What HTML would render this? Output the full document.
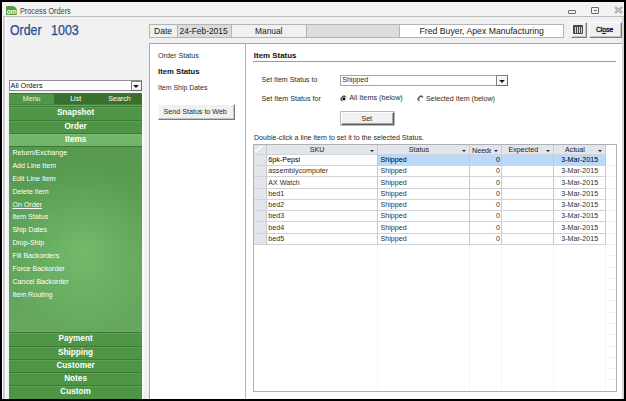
<!DOCTYPE html>
<html><head><meta charset="utf-8"><title>Process Orders</title>
<style>
*{box-sizing:border-box;margin:0;padding:0}
html,body{width:626px;height:401px;overflow:hidden;background:#000}
body{position:relative;font-family:"Liberation Sans",sans-serif;font-size:8px;color:#222}
.a{position:absolute}
.t{position:absolute;white-space:nowrap}
</style></head><body>
<div class="a" style="left:2px;top:2px;width:622px;height:397px;background:#f0f0f0;"></div>
<div class="a" style="left:2px;top:2px;width:622px;height:14px;background:#f2f2f2;"></div>
<div class="a" style="left:3px;top:16px;width:621px;height:1px;background:#bdbdbd;"></div>
<div class="a" style="left:2px;top:16px;width:1px;height:383px;background:#fff;"></div>
<div class="a" style="left:3px;top:17px;width:1px;height:382px;background:#c2c2c8;"></div>
<div class="a" style="left:4px;top:17px;width:1px;height:382px;background:#d4d4d9;"></div>
<div class="a" style="left:5px;top:17px;width:2px;height:382px;background:#f9f9f9;"></div>
<div class="a" style="left:622px;top:17px;width:2px;height:382px;background:#d6d6da;"></div>
<div class="a" style="left:6px;top:5.7px;width:10.5px;height:9.3px;background:#4f9b46;border-radius:1px 5px 1px 1px"></div>
<div class="t" style="left:6.8px;top:5.71px;font-size:6.6px;line-height:12px;color:#fff;font-weight:bold;">om</div>
<div class="t" style="left:20px;top:5.07px;font-size:9.6px;line-height:12px;color:#454545;transform-origin:0 50%;transform:scaleX(0.7618);">Process Orders</div>
<div class="a" style="left:568px;top:10px;width:8px;height:4px;border:1px solid #6a6a6a;border-radius:1px"></div>
<div class="a" style="left:591px;top:7px;width:8px;height:7px;border:1px solid #6a6a6a;border-radius:1px"></div>
<div class="a" style="left:593.5px;top:10px;width:3px;height:1px;background:#6a6a6a;"></div>
<svg class="a" style="left:614px;top:6px" width="9" height="8" viewBox="0 0 9 8"><path d="M1 1 L8 7 M8 1 L1 7" stroke="#8a8a8a" stroke-width="2.2" fill="none"/><path d="M1 1 L8 7 M8 1 L1 7" stroke="#f2f2f2" stroke-width="0.8" fill="none"/></svg>
<div class="t" style="left:9.5px;top:23.85px;font-size:14px;line-height:12px;color:#1f4f8f;transform-origin:0 50%;transform:scaleX(0.8802);-webkit-text-stroke:0.25px #1f4f8f;">Order</div>
<div class="t" style="left:51px;top:23.85px;font-size:14px;line-height:12px;color:#1f4f8f;transform-origin:0 50%;transform:scaleX(0.8926);-webkit-text-stroke:0.25px #1f4f8f;">1003</div>
<div class="a" style="left:149px;top:24.3px;width:415px;height:13.5px;background:#f0f0f0;border:1px solid #b4b4b4"></div>
<div class="a" style="left:177px;top:25px;width:55px;height:12px;background:#dcdcdc;border-left:1px solid #b4b4b4;border-right:1px solid #b4b4b4"></div>
<div class="a" style="left:306px;top:25px;width:94px;height:12px;background:#dcdcdc;border-left:1px solid #b4b4b4;border-right:1px solid #b4b4b4"></div>
<div class="a" style="left:400px;top:25px;width:163px;height:12px;background:#fff;"></div>
<div class="t" style="left:154px;top:24.65px;font-size:8.52px;line-height:12px;color:#1a1a1a;">Date</div>
<div class="t" style="left:179.6px;top:24.70px;font-size:8.38px;line-height:12px;color:#1a1a1a;">24-Feb-2015</div>
<div class="t" style="left:255px;top:24.70px;font-size:8.38px;line-height:12px;color:#1a1a1a;">Manual</div>
<div class="t" style="left:419.5px;top:24.58px;font-size:8.71px;line-height:12px;color:#1a1a1a;">Fred Buyer, Apex Manufacturing</div>
<div class="a" style="left:571px;top:22px;width:16px;height:16px;background:#f0f0f0;border:1px solid #fff;border-right-color:#7c7c7c;border-bottom-color:#7c7c7c;box-shadow:inset -1px -1px 0 #c4c4c4"></div>
<div class="a" style="left:573px;top:25px;width:10px;height:9px;background:#4a4a4a;border-radius:1px"></div>
<div class="a" style="left:575px;top:27px;width:1px;height:6px;background:#d8d8d8;"></div>
<div class="a" style="left:577px;top:27px;width:1px;height:6px;background:#d8d8d8;"></div>
<div class="a" style="left:579px;top:27px;width:1px;height:6px;background:#d8d8d8;"></div>
<div class="a" style="left:581px;top:27px;width:1px;height:6px;background:#d8d8d8;"></div>
<div class="a" style="left:589.3px;top:22px;width:32.5px;height:16px;background:#f0f0f0;border:1px solid #fff;border-right-color:#7c7c7c;border-bottom-color:#7c7c7c;box-shadow:inset -1px -1px 0 #c4c4c4"></div>
<div class="t" style="left:596px;top:24.07px;font-size:7.0px;line-height:12px;color:#0c1230;letter-spacing:-0.219px;-webkit-text-stroke:0.3px #0c1230;">Cl<u>o</u>se</div>
<div class="a" style="left:142px;top:92px;width:2px;height:307px;background:#fafafa;"></div>
<div class="a" style="left:149px;top:42.5px;width:473px;height:356.5px;background:#fff;border-left:1px solid #a8a8a8;border-top:1px solid #a8a8a8"></div>
<div class="a" style="left:245px;top:43px;width:1px;height:356px;background:#b4b4b4;"></div>
<div class="t" style="left:158px;top:49.69px;font-size:7.23px;line-height:12px;color:#2a2a2a;">Order Status</div>
<div class="t" style="left:158px;top:66.13px;font-size:7.72px;line-height:12px;color:#111;font-weight:bold;">Item Status</div>
<div class="t" style="left:158px;top:81.60px;font-size:6.94px;line-height:12px;color:#2a2a2a;">Item Ship Dates</div>
<div class="a" style="left:157.6px;top:104px;width:77.4px;height:16px;background:#f0f0f0;border:1px solid #fff;border-right-color:#7c7c7c;border-bottom-color:#7c7c7c;box-shadow:inset -1px -1px 0 #c4c4c4"></div>
<div class="t" style="left:163.6px;top:105.73px;font-size:7.14px;line-height:12px;color:#2a2a2a;">Send Status to Web</div>
<div class="t" style="left:253.8px;top:49.86px;font-size:7.92px;line-height:12px;color:#111;font-weight:bold;">Item Status</div>
<div class="a" style="left:253px;top:61px;width:363px;height:1px;background:#9a9a9a;"></div>
<div class="t" style="left:261.6px;top:73.87px;font-size:7.02px;line-height:12px;color:#2a2a2a;">Set Item Status to</div>
<div class="t" style="left:261.6px;top:92.52px;font-size:7.17px;line-height:12px;color:#2a2a2a;">Set Item Status for</div>
<div class="a" style="left:340px;top:74.5px;width:168px;height:11px;background:#fff;border:1px solid #a6a6a6"></div>
<div class="t" style="left:342.2px;top:74.05px;font-size:7.08px;line-height:12px;color:#2a2a2a;">Shipped</div>
<div class="a" style="left:496.4px;top:74.5px;width:11.6px;height:11px;background:#f2f2f2;border:1px solid #808080;border-right-color:#6a6a6a;border-bottom-color:#6a6a6a;box-shadow:inset 1px 1px 0 #fff"></div>
<svg class="a" style="left:499px;top:79.8px" width="6" height="3" viewBox="0 0 6 3"><path d="M0.2 0 L5.8 0 L3 2.9 Z" fill="#111"/></svg>
<svg class="a" style="left:339.9px;top:95px" width="8" height="8" viewBox="0 0 8 8"><circle cx="4" cy="4" r="3.4" fill="#fff"/><path d="M1.6 6.4 A3.4 3.4 0 0 1 6.4 1.6" fill="none" stroke="#6e6e6e" stroke-width="0.9"/><path d="M2.3 5.7 A2.4 2.4 0 0 1 5.7 2.3" fill="none" stroke="#222" stroke-width="0.9"/><path d="M6.4 1.6 A3.4 3.4 0 0 1 1.6 6.4" fill="none" stroke="#ececec" stroke-width="0.8"/><circle cx="4" cy="4" r="1.4" fill="#000"/></svg>
<div class="t" style="left:349.3px;top:92.49px;font-size:7.24px;line-height:12px;color:#2a2a2a;">All Items (below)</div>
<svg class="a" style="left:416.7px;top:95px" width="8" height="8" viewBox="0 0 8 8"><circle cx="4" cy="4" r="3.4" fill="#fff"/><path d="M1.6 6.4 A3.4 3.4 0 0 1 6.4 1.6" fill="none" stroke="#6e6e6e" stroke-width="0.9"/><path d="M2.3 5.7 A2.4 2.4 0 0 1 5.7 2.3" fill="none" stroke="#222" stroke-width="0.9"/><path d="M6.4 1.6 A3.4 3.4 0 0 1 1.6 6.4" fill="none" stroke="#ececec" stroke-width="0.8"/></svg>
<div class="t" style="left:426px;top:92.53px;font-size:7.13px;line-height:12px;color:#2a2a2a;">Selected Item (below)</div>
<div class="a" style="left:341px;top:112px;width:52.5px;height:13.4px;background:#f0f0f0;border:1px solid #fff;border-right-color:#5a5a5a;border-bottom-color:#5a5a5a;box-shadow:inset -1px -1px 0 #a8a8a8, 0 0 0 0.6px #8c8c8c"></div>
<div class="t" style="left:361.4px;top:112.83px;font-size:7.13px;line-height:12px;color:#2a2a2a;">Set</div>
<div class="t" style="left:254px;top:131.54px;font-size:7.1px;line-height:12px;color:#2a2a2a;">Double-click a line item to set it to the selected Status.</div>
<div class="a" style="left:9px;top:80.2px;width:133px;height:10.6px;background:#fff;border:1px solid #8f8f8f"></div>
<div class="t" style="left:10.6px;top:79.81px;font-size:7.2px;line-height:12px;color:#111;">All Orders</div>
<div class="a" style="left:130.8px;top:80.5px;width:11px;height:10.3px;background:#f2f2f2;border:1px solid #808080;border-right-color:#6a6a6a;border-bottom-color:#6a6a6a;box-shadow:inset 1px 1px 0 #fff"></div>
<svg class="a" style="left:133.2px;top:85.2px" width="6" height="3" viewBox="0 0 6 3"><path d="M0.2 0 L5.8 0 L3 2.9 Z" fill="#111"/></svg>
<div class="a" style="left:9px;top:93px;width:133px;height:305px;background:#4e9646;"></div>
<div class="a" style="left:9px;top:93px;width:45px;height:11px;background:#4f9747;"></div>
<div class="a" style="left:54px;top:93px;width:88px;height:11px;background:#38702f;"></div>
<div class="a" style="left:9px;top:93px;width:133px;height:1px;background:#3b7a36;"></div>
<div class="a" style="left:9px;top:104px;width:133px;height:1px;background:#3f7f39;"></div>
<div class="a" style="left:9px;top:105px;width:133px;height:1px;background:#6aac62;"></div>
<div class="t" style="left:22.82px;top:92.54px;font-size:7.1px;line-height:12px;color:#e9f6e2;">Menu</div>
<div class="t" style="left:70.18px;top:92.54px;font-size:7.1px;line-height:12px;color:#fff;">List</div>
<div class="t" style="left:108.25px;top:92.54px;font-size:7.1px;line-height:12px;color:#fff;">Search</div>
<div class="a" style="left:9px;top:106px;width:133px;height:14px;background:#4e9646;border-top:1px solid #3b7a36;box-shadow:inset 0 1px 0 rgba(255,255,255,0.10)"></div>
<div class="t" style="left:56.92px;top:107.36px;font-size:8.2px;line-height:12px;color:#fff;font-weight:bold;">Snapshot</div>
<div class="a" style="left:9px;top:119.6px;width:133px;height:14px;background:#4e9646;border-top:1px solid #3b7a36;box-shadow:inset 0 1px 0 rgba(255,255,255,0.10)"></div>
<div class="t" style="left:64.44px;top:120.96px;font-size:8.2px;line-height:12px;color:#fff;font-weight:bold;">Order</div>
<div class="a" style="left:9px;top:133px;width:133px;height:14px;background:#72b56a;border-top:1px solid #3b7a36;box-shadow:inset 0 1px 0 rgba(255,255,255,0.10)"></div>
<div class="t" style="left:64.89px;top:134.36px;font-size:8.2px;line-height:12px;color:#fff;font-weight:bold;">Items</div>
<div class="a" style="left:9px;top:146.4px;width:133px;height:186px;background:linear-gradient(180deg,rgba(0,0,0,0.05),rgba(255,255,255,0.07)),radial-gradient(ellipse 62% 44% at 56% 56%,#6fbc67 0%,#63ad5c 55%,#5aa153 100%);border-top:1px solid #3b7a36"></div>
<div class="t" style="left:12.4px;top:146.95px;font-size:7.08px;line-height:12px;color:#fff;">Return/Exchange</div>
<div class="t" style="left:12.4px;top:159.85px;font-size:7.08px;line-height:12px;color:#fff;">Add Line Item</div>
<div class="t" style="left:12.4px;top:172.75px;font-size:7.08px;line-height:12px;color:#fff;">Edit Line Item</div>
<div class="t" style="left:12.4px;top:185.65px;font-size:7.08px;line-height:12px;color:#fff;">Delete Item</div>
<div class="t" style="left:12.4px;top:198.55px;font-size:7.08px;line-height:12px;color:#fff;text-decoration:underline;">On Order</div>
<div class="t" style="left:12.4px;top:211.45px;font-size:7.08px;line-height:12px;color:#fff;">Item Status</div>
<div class="t" style="left:12.4px;top:224.35px;font-size:7.08px;line-height:12px;color:#fff;">Ship Dates</div>
<div class="t" style="left:12.4px;top:237.25px;font-size:7.08px;line-height:12px;color:#fff;">Drop-Ship</div>
<div class="t" style="left:12.4px;top:250.15px;font-size:7.08px;line-height:12px;color:#fff;">Fill Backorders</div>
<div class="t" style="left:12.4px;top:263.05px;font-size:7.08px;line-height:12px;color:#fff;">Force Backorder</div>
<div class="t" style="left:12.4px;top:275.95px;font-size:7.08px;line-height:12px;color:#fff;">Cancel Backorder</div>
<div class="t" style="left:12.4px;top:288.85px;font-size:7.08px;line-height:12px;color:#fff;">Item Routing</div>
<div class="a" style="left:9px;top:332px;width:133px;height:14px;background:#4e9646;border-top:1px solid #3b7a36;box-shadow:inset 0 1px 0 rgba(255,255,255,0.10)"></div>
<div class="t" style="left:58.51px;top:333.36px;font-size:8.2px;line-height:12px;color:#fff;font-weight:bold;">Payment</div>
<div class="a" style="left:9px;top:345.5px;width:133px;height:14px;background:#4e9646;border-top:1px solid #3b7a36;box-shadow:inset 0 1px 0 rgba(255,255,255,0.10)"></div>
<div class="t" style="left:58.06px;top:346.86px;font-size:8.2px;line-height:12px;color:#fff;font-weight:bold;">Shipping</div>
<div class="a" style="left:9px;top:358.8px;width:133px;height:14px;background:#4e9646;border-top:1px solid #3b7a36;box-shadow:inset 0 1px 0 rgba(255,255,255,0.10)"></div>
<div class="t" style="left:56.46px;top:360.16px;font-size:8.2px;line-height:12px;color:#fff;font-weight:bold;">Customer</div>
<div class="a" style="left:9px;top:372px;width:133px;height:14px;background:#4e9646;border-top:1px solid #3b7a36;box-shadow:inset 0 1px 0 rgba(255,255,255,0.10)"></div>
<div class="t" style="left:64.21px;top:373.36px;font-size:8.2px;line-height:12px;color:#fff;font-weight:bold;">Notes</div>
<div class="a" style="left:9px;top:385px;width:133px;height:14px;background:#4e9646;border-top:1px solid #3b7a36;box-shadow:inset 0 1px 0 rgba(255,255,255,0.10)"></div>
<div class="t" style="left:60.34px;top:386.36px;font-size:8.2px;line-height:12px;color:#fff;font-weight:bold;">Custom</div>
<div class="a" style="left:253px;top:144px;width:364px;height:248px;background:#fff;border:1px solid #adb0b5"></div>
<div class="a" style="left:254px;top:145px;width:351.5px;height:9.300000000000011px;background:#e2e5ea;"></div>
<div class="a" style="left:254px;top:154.3px;width:12px;height:90.23999999999998px;background:#e2e5ea;"></div>
<div class="a" style="left:378px;top:154.3px;width:227.5px;height:11.28px;background:#b9d9fb;"></div>
<div class="a" style="left:266px;top:145px;width:1px;height:100px;background:#c6cad0;"></div>
<div class="a" style="left:377px;top:145px;width:1px;height:100px;background:#c6cad0;"></div>
<div class="a" style="left:469px;top:145px;width:1px;height:100px;background:#c6cad0;"></div>
<div class="a" style="left:501px;top:145px;width:1px;height:100px;background:#c6cad0;"></div>
<div class="a" style="left:553px;top:145px;width:1px;height:100px;background:#c6cad0;"></div>
<div class="a" style="left:605px;top:145px;width:1px;height:100px;background:#c6cad0;"></div>
<div class="a" style="left:254px;top:154px;width:352px;height:1px;background:#d0d4da;"></div>
<div class="a" style="left:254px;top:165px;width:352px;height:1px;background:#d0d4da;"></div>
<div class="a" style="left:254px;top:176px;width:352px;height:1px;background:#d0d4da;"></div>
<div class="a" style="left:254px;top:188px;width:352px;height:1px;background:#d0d4da;"></div>
<div class="a" style="left:254px;top:199px;width:352px;height:1px;background:#d0d4da;"></div>
<div class="a" style="left:254px;top:210px;width:352px;height:1px;background:#d0d4da;"></div>
<div class="a" style="left:254px;top:221px;width:352px;height:1px;background:#d0d4da;"></div>
<div class="a" style="left:254px;top:233px;width:352px;height:1px;background:#d0d4da;"></div>
<div class="a" style="left:254px;top:244px;width:352px;height:1px;background:#d0d4da;"></div>
<div class="a" style="left:377px;top:245px;width:1px;height:146px;background:#f7f7f7;"></div>
<div class="a" style="left:469px;top:245px;width:1px;height:146px;background:#f7f7f7;"></div>
<div class="a" style="left:501px;top:245px;width:1px;height:146px;background:#f7f7f7;"></div>
<div class="a" style="left:553px;top:245px;width:1px;height:146px;background:#f7f7f7;"></div>
<div class="a" style="left:605px;top:245px;width:1px;height:146px;background:#f7f7f7;"></div>
<div class="a" style="left:606px;top:165px;width:10px;height:1px;background:#f0f0f0;"></div>
<div class="a" style="left:606px;top:176px;width:10px;height:1px;background:#f0f0f0;"></div>
<div class="a" style="left:606px;top:188px;width:10px;height:1px;background:#f0f0f0;"></div>
<div class="a" style="left:606px;top:199px;width:10px;height:1px;background:#f0f0f0;"></div>
<div class="a" style="left:606px;top:210px;width:10px;height:1px;background:#f0f0f0;"></div>
<div class="a" style="left:606px;top:221px;width:10px;height:1px;background:#f0f0f0;"></div>
<div class="a" style="left:606px;top:233px;width:10px;height:1px;background:#f0f0f0;"></div>
<div class="a" style="left:606px;top:244px;width:10px;height:1px;background:#f0f0f0;"></div>
<div class="a" style="left:606px;top:255px;width:10px;height:1px;background:#f0f0f0;"></div>
<div class="a" style="left:606px;top:267px;width:10px;height:1px;background:#f0f0f0;"></div>
<div class="a" style="left:606px;top:278px;width:10px;height:1px;background:#f0f0f0;"></div>
<div class="a" style="left:606px;top:289px;width:10px;height:1px;background:#f0f0f0;"></div>
<div class="a" style="left:606px;top:300px;width:10px;height:1px;background:#f0f0f0;"></div>
<div class="a" style="left:606px;top:312px;width:10px;height:1px;background:#f0f0f0;"></div>
<div class="a" style="left:606px;top:323px;width:10px;height:1px;background:#f0f0f0;"></div>
<div class="a" style="left:606px;top:334px;width:10px;height:1px;background:#f0f0f0;"></div>
<div class="a" style="left:606px;top:346px;width:10px;height:1px;background:#f0f0f0;"></div>
<div class="a" style="left:606px;top:357px;width:10px;height:1px;background:#f0f0f0;"></div>
<div class="a" style="left:606px;top:368px;width:10px;height:1px;background:#f0f0f0;"></div>
<div class="a" style="left:606px;top:379px;width:10px;height:1px;background:#f0f0f0;"></div>
<div class="t" style="left:309.65px;top:144.32px;font-size:7.15px;line-height:12px;color:#222;">SKU</div>
<div class="t" style="left:408.86px;top:144.32px;font-size:7.15px;line-height:12px;color:#222;">Status</div>
<div class="t" style="left:472px;top:145.10px;width:18.5px;overflow:hidden;font-size:7.15px;line-height:12px;color:#222">Needed</div>
<div class="t" style="left:508.39px;top:144.32px;font-size:7.15px;line-height:12px;color:#222;">Expected</div>
<div class="t" style="left:565.06px;top:144.32px;font-size:7.15px;line-height:12px;color:#222;">Actual</div>
<div class="a" style="left:370px;top:150px;width:0px;height:0px;border-left:2px solid transparent;border-right:2px solid transparent;border-top:2px solid #222"></div>
<div class="a" style="left:461.5px;top:150px;width:0px;height:0px;border-left:2px solid transparent;border-right:2px solid transparent;border-top:2px solid #222"></div>
<div class="a" style="left:493.7px;top:150px;width:0px;height:0px;border-left:2px solid transparent;border-right:2px solid transparent;border-top:2px solid #222"></div>
<div class="a" style="left:545.8px;top:150px;width:0px;height:0px;border-left:2px solid transparent;border-right:2px solid transparent;border-top:2px solid #222"></div>
<div class="a" style="left:597.8px;top:150px;width:0px;height:0px;border-left:2px solid transparent;border-right:2px solid transparent;border-top:2px solid #222"></div>
<svg class="a" style="left:255px;top:146px" width="8" height="6"><path d="M0 6 L7 0" stroke="#fff" stroke-width="1.5"/></svg>
<div class="t" style="left:268.3px;top:154.02px;font-size:7.15px;line-height:12px;color:#000;">6pk-Pepsi</div>
<div class="t" style="left:380.5px;top:154.02px;font-size:7.15px;line-height:12px;color:#000;">Shipped</div>
<div class="t" style="left:496.02px;top:154.02px;font-size:7.15px;line-height:12px;color:#000;">0</div>
<div class="t" style="left:561.22px;top:154.02px;font-size:7.15px;line-height:12px;color:#000;">3-Mar-2015</div>
<div class="t" style="left:268.3px;top:165.30px;font-size:7.15px;line-height:12px;color:#303030;">assemblycomputer</div>
<div class="t" style="left:380.5px;top:165.30px;font-size:7.15px;line-height:12px;color:#303030;">Shipped</div>
<div class="t" style="left:496.02px;top:165.30px;font-size:7.15px;line-height:12px;color:#303030;">0</div>
<div class="t" style="left:561.22px;top:165.30px;font-size:7.15px;line-height:12px;color:#303030;">3-Mar-2015</div>
<div class="t" style="left:268.3px;top:176.58px;font-size:7.15px;line-height:12px;color:#303030;">AX Watch</div>
<div class="t" style="left:380.5px;top:176.58px;font-size:7.15px;line-height:12px;color:#303030;">Shipped</div>
<div class="t" style="left:496.02px;top:176.58px;font-size:7.15px;line-height:12px;color:#303030;">0</div>
<div class="t" style="left:561.22px;top:176.58px;font-size:7.15px;line-height:12px;color:#303030;">3-Mar-2015</div>
<div class="t" style="left:268.3px;top:187.86px;font-size:7.15px;line-height:12px;color:#303030;">bed1</div>
<div class="t" style="left:380.5px;top:187.86px;font-size:7.15px;line-height:12px;color:#303030;">Shipped</div>
<div class="t" style="left:496.02px;top:187.86px;font-size:7.15px;line-height:12px;color:#303030;">0</div>
<div class="t" style="left:561.22px;top:187.86px;font-size:7.15px;line-height:12px;color:#303030;">3-Mar-2015</div>
<div class="t" style="left:268.3px;top:199.14px;font-size:7.15px;line-height:12px;color:#303030;">bed2</div>
<div class="t" style="left:380.5px;top:199.14px;font-size:7.15px;line-height:12px;color:#303030;">Shipped</div>
<div class="t" style="left:496.02px;top:199.14px;font-size:7.15px;line-height:12px;color:#303030;">0</div>
<div class="t" style="left:561.22px;top:199.14px;font-size:7.15px;line-height:12px;color:#303030;">3-Mar-2015</div>
<div class="t" style="left:268.3px;top:210.42px;font-size:7.15px;line-height:12px;color:#303030;">bed3</div>
<div class="t" style="left:380.5px;top:210.42px;font-size:7.15px;line-height:12px;color:#303030;">Shipped</div>
<div class="t" style="left:496.02px;top:210.42px;font-size:7.15px;line-height:12px;color:#303030;">0</div>
<div class="t" style="left:561.22px;top:210.42px;font-size:7.15px;line-height:12px;color:#303030;">3-Mar-2015</div>
<div class="t" style="left:268.3px;top:221.70px;font-size:7.15px;line-height:12px;color:#303030;">bed4</div>
<div class="t" style="left:380.5px;top:221.70px;font-size:7.15px;line-height:12px;color:#303030;">Shipped</div>
<div class="t" style="left:496.02px;top:221.70px;font-size:7.15px;line-height:12px;color:#303030;">0</div>
<div class="t" style="left:561.22px;top:221.70px;font-size:7.15px;line-height:12px;color:#303030;">3-Mar-2015</div>
<div class="t" style="left:268.3px;top:232.98px;font-size:7.15px;line-height:12px;color:#303030;">bed5</div>
<div class="t" style="left:380.5px;top:232.98px;font-size:7.15px;line-height:12px;color:#303030;">Shipped</div>
<div class="t" style="left:496.02px;top:232.98px;font-size:7.15px;line-height:12px;color:#303030;">0</div>
<div class="t" style="left:561.22px;top:232.98px;font-size:7.15px;line-height:12px;color:#303030;">3-Mar-2015</div>
<div class="a" style="left:0px;top:0px;width:626px;height:2px;background:#000;"></div>
<div class="a" style="left:0px;top:399px;width:626px;height:2px;background:#000;"></div>
<div class="a" style="left:0px;top:0px;width:2px;height:401px;background:#000;"></div>
<div class="a" style="left:624px;top:0px;width:2px;height:401px;background:#000;"></div>
</body></html>
